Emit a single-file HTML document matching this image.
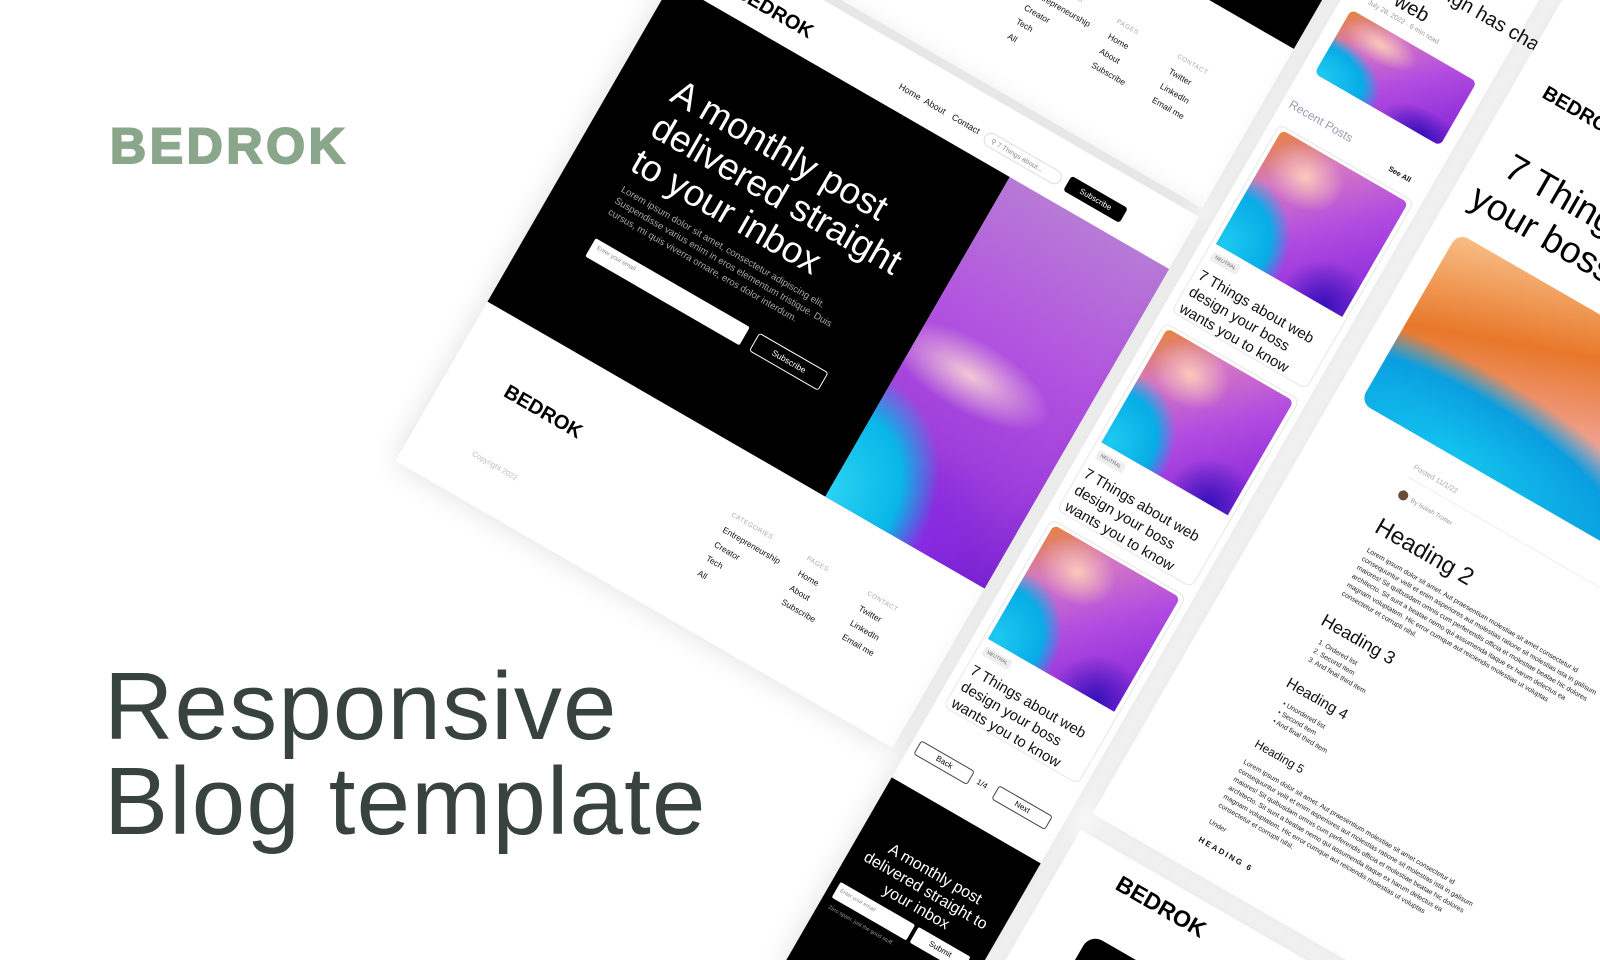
<!DOCTYPE html>
<html><head><meta charset="utf-8">
<style>
*{margin:0;padding:0;box-sizing:border-box}
html,body{width:1600px;height:960px;overflow:hidden;background:#fff;font-family:"Liberation Sans",sans-serif}
#root{position:relative;width:1600px;height:960px;overflow:hidden;contain:paint;background:#fff}
.logo{position:absolute;left:110px;top:117px;font-size:50px;font-weight:700;color:#8aa68b;letter-spacing:3.6px;-webkit-text-stroke:2px #8aa68b}
.big{position:absolute;left:104px;top:659px;font-size:96px;line-height:95px;color:#38423f;letter-spacing:1.2px}
.w{position:absolute;left:672px;top:-18px;width:0;height:0;transform-origin:0 0;transform:rotate(30deg)}
.w div{position:absolute}
.card{background:#fff;box-shadow:0 0 28px rgba(0,0,0,0.13)}
.blk{background:#000}
.t{white-space:nowrap}
.g1{background:
 radial-gradient(70% 14% at 35% 52%, rgba(255,222,215,.85), transparent 70%),
 radial-gradient(75% 45% at 0% 98%, #2ad4f2 0%, #08b6e8 50%, transparent 76%),
 radial-gradient(45% 35% at 55% 98%, #8a2be2 0%, transparent 70%),
 linear-gradient(180deg,#b77ad6 0%,#b252e0 40%,#a040dc 70%,#7a22d4 100%)}
.g2{background:
 radial-gradient(40% 35% at 30% 22%, rgba(255,205,185,.95), transparent 70%),
 radial-gradient(60% 75% at 5% 95%, #1ccaf0 0%, #07ace6 50%, transparent 72%),
 radial-gradient(45% 50% at 85% 100%, #3510b8, transparent 70%),
 linear-gradient(135deg,#e8843c 0%,#d478c4 25%,#b24ce0 55%,#8424d8 100%)}
.g3{background:
 radial-gradient(80% 60% at 25% 100%, #12c4ef 0%, #0a9ee0 55%, transparent 78%),
 radial-gradient(50% 50% at 90% 40%, #e4a0d0, transparent 70%),
 linear-gradient(160deg,#f9c089 0%,#e8782a 30%,#f2a49a 58%,#d098e0 100%)}
.nav{font-size:9px;color:#111}
.fh{font-size:6.5px;color:#aaa;letter-spacing:.5px}
.fi{font-size:8.5px;color:#111;line-height:16.5px}
.post{border:1px solid #e6e6e6;border-radius:7px;width:156px;height:217px;background:#fff}
.ptitle{font-size:15px;line-height:19px;color:#111}
.tag{font-size:5px;color:#666;background:#eee;padding:2px 4px;border-radius:2px}
.ap{font-size:7px;line-height:10px;color:#222}
</style></head><body><div id="root">
<div class="logo">BEDROK</div>
<div class="big">Responsive<br>Blog template</div>

<div class="w">
  <div class="card" style="left:0;top:-700px;width:572px;height:631px"></div>
  <div class="blk" style="left:0;top:-700px;width:572px;height:447px"></div>
  <div class="fh t" style="left:318px;top:-192px">CATEGORIES</div>
  <div class="fi t" style="left:318px;top:-180px">Entrepreneurship<br>Creator<br>Tech<br>All</div>
  <div class="fh t" style="left:405px;top:-192px">PAGES</div>
  <div class="fi t" style="left:405px;top:-180px">Home<br>About<br>Subscribe</div>
  <div class="fh t" style="left:475px;top:-192px">CONTACT</div>
  <div class="fi t" style="left:475px;top:-180px">Twitter<br>LinkedIn<br>Email me</div>

  <div class="card" style="left:0;top:-60px;width:574px;height:613px"></div>
  <div class="t" style="left:60px;top:-36px;font-size:20px;font-weight:700;color:#000">BEDROK</div>
  <div class="nav t" style="left:249px;top:-29px">Home</div>
  <div class="nav t" style="left:278px;top:-29px">About</div>
  <div class="nav t" style="left:310px;top:-29px">Contact</div>
  <div class="t" style="left:348px;top:-30px;width:88px;height:15px;border:1px solid #ddd;border-radius:8px;font-size:7px;color:#888;padding:3px 7px">&#9906; 7 Things about...</div>
  <div class="t" style="left:443px;top:-32px;width:65px;height:17px;background:#000;border-radius:3px;color:#fff;font-size:8px;text-align:center;line-height:17px">Subscribe</div>
  <div class="blk" style="left:0;top:0;width:390px;height:369px"></div>
  <div class="g1" style="left:390px;top:0;width:184px;height:369px"></div>
  <div class="t" style="left:56px;top:72px;font-size:37px;line-height:40px;color:#fff">A monthly post<br>delivered straight<br>to your inbox</div>
  <div class="t" style="left:60px;top:198px;font-size:9.6px;line-height:13px;color:#a8a8a8">Lorem ipsum dolor sit amet, consectetur adipiscing elit.<br>Suspendisse varius enim in eros elementum tristique. Duis<br>cursus, mi quis viverra ornare, eros dolor interdum.</div>
  <div class="t" style="left:62px;top:260px;width:178px;height:21px;background:#fff;border-radius:2px;font-size:6px;color:#888;padding:5px 6px">Enter your email</div>
  <div class="t" style="left:251px;top:260px;width:80px;height:21px;border:1px solid #fff;border-radius:3px;font-size:8.5px;color:#fff;text-align:center;line-height:19px">Subscribe</div>
  <div class="t" style="left:60px;top:426px;font-size:20px;font-weight:700;color:#000">BEDROK</div>
  <div class="t" style="left:63px;top:503px;font-size:7.5px;color:#bbb">Copyright 2022</div>
  <div class="fh t" style="left:318px;top:428px">CATEGORIES</div>
  <div class="fi t" style="left:318px;top:440px">Entrepreneurship<br>Creator<br>Tech<br>All</div>
  <div class="fh t" style="left:405px;top:428px">PAGES</div>
  <div class="fi t" style="left:405px;top:440px">Home<br>About<br>Subscribe</div>
  <div class="fh t" style="left:475px;top:428px">CONTACT</div>
  <div class="fi t" style="left:475px;top:440px">Twitter<br>LinkedIn<br>Email me</div>

  <div class="card" style="left:588px;top:-760px;width:172px;height:1560px"></div>
  <div class="t" style="left:602px;top:-392px;font-size:20px;line-height:30px;color:#111">How design has changed<br>the web</div>
  <div class="t" style="left:613px;top:-334px;font-size:7px;color:#999">July 28, 2022 · 6 min read</div>
  <div class="g2" style="left:602px;top:-316px;width:145px;height:74px;border-radius:6px"></div>
  <div class="t" style="left:596px;top:-211px;font-size:12px;color:#9a9ab2">Recent Posts</div>
  <div class="t" style="left:714px;top:-202px;font-size:7.5px;font-weight:700;color:#111">See All</div>

  <div class="post" style="left:597px;top:-181px"></div>
  <div class="g2" style="left:602px;top:-177px;width:146px;height:132px;border-radius:6px 6px 0 0"></div>
  <div class="tag t" style="left:604px;top:-38px">NEUTRAL</div>
  <div class="ptitle t" style="left:603px;top:-20px">7 Things about web<br>design your boss<br>wants you to know</div>

  <div class="post" style="left:597px;top:48px"></div>
  <div class="g2" style="left:602px;top:52px;width:146px;height:132px;border-radius:6px 6px 0 0"></div>
  <div class="tag t" style="left:604px;top:191px">NEUTRAL</div>
  <div class="ptitle t" style="left:603px;top:209px">7 Things about web<br>design your boss<br>wants you to know</div>

  <div class="post" style="left:597px;top:275px"></div>
  <div class="g2" style="left:602px;top:279px;width:146px;height:132px;border-radius:6px 6px 0 0"></div>
  <div class="tag t" style="left:604px;top:418px">NEUTRAL</div>
  <div class="ptitle t" style="left:603px;top:436px">7 Things about web<br>design your boss<br>wants you to know</div>

  <div class="t" style="left:595px;top:532px;width:62px;height:16px;border:1px solid #444;border-radius:3px;font-size:8px;text-align:center;line-height:14px">Back</div>
  <div class="t" style="left:664px;top:535px;font-size:8px">1/4</div>
  <div class="t" style="left:685px;top:532px;width:62px;height:16px;border:1px solid #444;border-radius:3px;font-size:8px;text-align:center;line-height:14px">Next</div>
  <div class="blk" style="left:588px;top:579px;width:172px;height:220px"></div>
  <div class="t" style="left:588px;top:632px;width:172px;text-align:center;font-size:16px;line-height:19px;color:#fff">A monthly post<br>delivered straight to<br>your inbox</div>
  <div class="t" style="left:596px;top:695px;width:86px;height:18px;background:#fff;border-radius:2px;font-size:5.5px;color:#888;padding:5px 4px">Enter your email</div>
  <div class="t" style="left:686px;top:695px;width:60px;height:18px;background:#fff;border-radius:2px;font-size:8px;color:#000;text-align:center;line-height:18px">Submit</div>
  <div class="t" style="left:598px;top:720px;font-size:5.5px;color:#999">Zero spam, just the good stuff.</div>

  <div class="card" style="left:780px;top:-760px;width:620px;height:1270px"></div>
  <div class="t" style="left:810px;top:-352px;font-size:20px;font-weight:700;color:#000">BEDROK</div>
  <div class="t" style="left:815px;top:-282px;font-size:37px;line-height:43px;color:#000">7 Things about web design</div>
  <div class="t" style="left:800px;top:-239px;font-size:37px;line-height:43px;color:#000">your boss wants you to know</div>
  <div class="g3" style="left:806px;top:-176px;width:430px;height:196px;border-radius:12px"></div>
  <div class="t" style="left:885px;top:44px;font-size:7.5px;color:#aaa">Posted 11/1/22</div>
  <div style="left:885px;top:60px;width:400px;height:1px;background:#eee"></div>
  <div style="left:885px;top:74px;width:10px;height:10px;border-radius:50%;background:#6b4a38"></div>
  <div class="t" style="left:899px;top:76px;font-size:6.5px;color:#999">By Isaiah Trotter</div>
  <div class="t" style="left:882px;top:104px;font-size:24px;color:#111">Heading 2</div>
  <div class="ap t" style="left:886px;top:140px">Lorem ipsum dolor sit amet. Aut praesentium molestiae sit amet consectetur id<br>consequuntur velit et enim asperiores aut molestias ratione sit molestias ista in galisum<br>maiores! Sit quibusdam omnis cum perferendis officia et molestiae beatae hic dolores<br>architecto. Sit sunt a beatae nemo qui assumenda itaque ex harum delectus ea<br>magnam voluptatem. Hic error cumque aut reiciendis molestias ut voluptas<br>consectetur et corrupti nihil.</div>
  <div class="t" style="left:882px;top:216px;font-size:18px;color:#111">Heading 3</div>
  <div class="ap t" style="left:890px;top:244px">1. Ordered list<br>2. Second item<br>3. And final third item</div>
  <div class="t" style="left:883px;top:290px;font-size:15px;color:#111">Heading 4</div>
  <div class="ap t" style="left:890px;top:315px">• Unordered list<br>• Second item<br>• And final third item</div>
  <div class="t" style="left:886px;top:360px;font-size:12px;color:#111">Heading 5</div>
  <div class="ap t" style="left:885px;top:385px">Lorem ipsum dolor sit amet. Aut praesentium molestiae sit amet consectetur id<br>consequuntur velit et enim asperiores aut molestias ratione sit molestias ista in galisum<br>maiores! Sit quibusdam omnis cum perferendis officia et molestiae beatae hic dolores<br>architecto. Sit sunt a beatae nemo qui assumenda itaque ex harum delectus ea<br>magnam voluptatem. Hic error cumque aut reiciendis molestias ut voluptas<br>consectetur et corrupti nihil.</div>
  <div class="t" style="left:885px;top:455px;font-size:7px;color:#222">Under</div>
  <div class="t" style="left:885px;top:474px;font-size:8px;font-weight:700;letter-spacing:2px;color:#111">HEADING 6</div>

  <div class="card" style="left:778px;top:530px;width:620px;height:200px"></div>
  <div class="t" style="left:836px;top:543px;font-size:23px;font-weight:700;color:#000">BEDROK</div>
  <div class="blk" style="left:838px;top:615px;width:320px;height:110px;border-radius:14px 14px 0 0"></div>
</div>
</div></body></html>
